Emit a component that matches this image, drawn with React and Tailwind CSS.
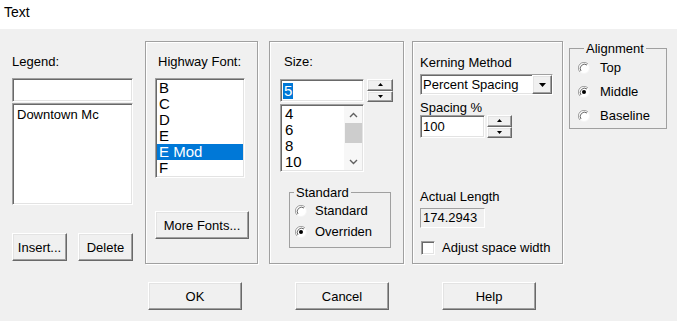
import React from "react";

// classic win32 bevels
const raised =
  "bg-[#f0f0f0] border border-t-white border-l-white border-r-[#696969] border-b-[#696969] shadow-[inset_-1px_-1px_0_#a0a0a0,inset_1px_1px_0_#e3e3e3]";
const sunken =
  "bg-white border border-t-[#a0a0a0] border-l-[#a0a0a0] border-r-white border-b-white shadow-[inset_1px_1px_0_#696969,inset_-1px_-1px_0_#e3e3e3]";
const panel =
  "border border-[#a0a0a0] shadow-[inset_1px_1px_0_white,1px_1px_0_white]";

const Tri = ({ up }) => (
  <svg width="5" height="3" viewBox="0 0 5 3">
    <path d={up ? "M2.5 0 L5 3 L0 3 Z" : "M0 0 L5 0 L2.5 3 Z"} fill="#000" />
  </svg>
);

const Spinner = ({ w }) => (
  <div className={`flex flex-col h-full ${w}`}>
    <div className={`${raised} flex-1 flex items-center justify-center`}>
      <Tri up />
    </div>
    <div className={`${raised} flex-1 flex items-center justify-center`}>
      <Tri />
    </div>
  </div>
);

const Radio = ({ checked }) => (
  <svg width="12" height="12" viewBox="0 0 12 12" className="shrink-0">
    <circle cx="6" cy="6" r="5.5" fill="#fff" stroke="#f4f4f4" />
    <path d="M10 2 A5.6 5.6 0 0 0 2 10" fill="none" stroke="#a0a0a0" />
    <path d="M9 3 A4.3 4.3 0 0 0 3 9" fill="none" stroke="#696969" />
    {checked && <circle cx="6" cy="6" r="2" fill="#000" />}
  </svg>
);

const Btn = ({ w, children }) => (
  <button className={`${raised} ${w} h-[28px] text-[13px] leading-none text-black`}>
    {children}
  </button>
);

const Chevron = ({ up }) => (
  <svg width="9" height="6" viewBox="0 0 9 6">
    <path
      d={up ? "M1 5 L4.5 1.5 L8 5" : "M1 1 L4.5 4.5 L8 1"}
      fill="none"
      stroke="#606060"
      strokeWidth="1.4"
    />
  </svg>
);

// group box: caption sits on the top border
const GroupBox = ({ title, className, boxH, legendMl, children }) => (
  <div className={`flex flex-col ${className}`}>
    <div className={`mt-[7px] border border-[#a0a0a0] flex flex-col ${boxH}`}>
      <span className={`-mt-[8px] ${legendMl} self-start bg-[#f0f0f0] px-[2px] leading-[15px]`}>
        {title}
      </span>
      {children}
    </div>
  </div>
);

export default function App() {
  const fonts = ["B", "C", "D", "E", "E Mod", "F"];
  const sizes = ["4", "6", "8", "10"];

  return (
    <div className="w-[677px] h-[321px] bg-[#f0f0f0] font-['Liberation_Sans',Arial,sans-serif] text-[13px] text-black overflow-hidden">
      {/* title bar */}
      <div className="h-[29px] bg-white pl-[4px] pt-[4px] text-[14px] leading-[17px]">
        Text
      </div>

      <div className="flex items-start pt-[12px]">
        {/* Legend column */}
        <div className="ml-[12px] w-[121px] shrink-0 flex flex-col">
          <div className="mt-[13px] leading-[15px]">Legend:</div>
          <div className={`${sunken} mt-[9px] h-[24px]`} />
          <div className={`${sunken} mt-[1px] h-[102px] pl-[4px] pt-[3px] leading-[15px]`}>
            Downtown Mc
          </div>
          <div className="flex mt-[28px] gap-[11px]">
            <Btn w="w-[55px]">Insert...</Btn>
            <Btn w="w-[55px]">Delete</Btn>
          </div>
        </div>

        {/* Highway font */}
        <div className={`${panel} ml-[12px] w-[113px] h-[223px] shrink-0 flex flex-col pl-[9px]`}>
          <div className="mt-[12px] pl-[3px] leading-[15px]">Highway Font:</div>
          <div className={`${sunken} mt-[9px] w-[90px] h-[100px] pt-[1px] px-[1px] text-[15px] leading-[16px]`}>
            {fonts.map((f) => (
              <div
                key={f}
                className={`h-[16px] pl-[2px] ${f === "E Mod" ? "bg-[#0078d7] text-white" : ""}`}
              >
                {f}
              </div>
            ))}
          </div>
          <div className="mt-[33px]">
            <Btn w="w-[94px]">More Fonts...</Btn>
          </div>
        </div>

        {/* Size */}
        <div className={`${panel} ml-[11px] w-[135px] h-[223px] shrink-0 flex flex-col pl-[10px]`}>
          <div className="mt-[12px] pl-[4px] leading-[15px]">Size:</div>
          <div className="flex mt-[10px] h-[23px]">
            <div className={`${sunken} w-[84px] pl-[2px] flex items-center`}>
              <span className="bg-[#0078d7] text-white text-[15px] leading-[16px] px-[1px]">5</span>
            </div>
            <div className="ml-[3px] h-full">
              <Spinner w="w-[26px]" />
            </div>
          </div>
          <div className={`${sunken} mt-[2px] w-[84px] h-[68px] flex`}>
            <div className="flex-1 pl-[4px] pt-[1px] text-[15px] leading-[16px]">
              {sizes.map((s) => (
                <div key={s} className="h-[16px]">
                  {s}
                </div>
              ))}
            </div>
            <div className="w-[18px] flex flex-col items-center bg-[#f7f7f7] my-[1px] mr-[1px]">
              <div className="h-[17px] flex items-center justify-center">
                <Chevron up />
              </div>
              <div className="w-[17px] h-[20px] bg-[#cdcdcd]" />
              <div className="flex-1" />
              <div className="h-[17px] flex items-center justify-center">
                <Chevron />
              </div>
            </div>
          </div>
          <GroupBox
            title="Standard"
            className="mt-[13px] ml-[9px] w-[102px]"
            boxH="h-[56px]"
            legendMl="ml-[4px]"
          >
            <div className="h-[21px] flex items-center gap-[8px] pl-[5px]">
              <Radio />
              <span>Standard</span>
            </div>
            <div className="h-[22px] flex items-center gap-[8px] pl-[5px]">
              <Radio checked />
              <span>Overriden</span>
            </div>
          </GroupBox>
        </div>

        {/* Kerning */}
        <div className={`${panel} ml-[8px] w-[151px] h-[223px] shrink-0 flex flex-col pl-[7px]`}>
          <div className="mt-[13px] leading-[15px]">Kerning Method</div>
          <div className={`${sunken} mt-[4px] w-[133px] h-[21px] flex`}>
            <div className="flex-1 pl-[2px] leading-[19px]">Percent Spacing</div>
            <div className={`${raised} w-[20px] flex items-center justify-center`}>
              <svg width="7" height="4" viewBox="0 0 7 4">
                <path d="M0 0 L7 0 L3.5 4 Z" fill="#000" />
              </svg>
            </div>
          </div>
          <div className="mt-[5px] leading-[15px]">Spacing %</div>
          <div className="flex h-[23px]">
            <div className={`${sunken} w-[65px] pl-[2px] leading-[21px]`}>100</div>
            <div className="ml-[2px] h-full">
              <Spinner w="w-[25px]" />
            </div>
          </div>
          <div className="mt-[51px] leading-[15px]">Actual Length</div>
          <div className="mt-[4px] w-[65px] h-[20px] border border-t-[#a0a0a0] border-l-[#a0a0a0] border-r-white border-b-white pl-[2px] leading-[18px]">
            174.2943
          </div>
          <div className="mt-[10px] flex items-center">
            <div className={`${sunken} ml-[1px] w-[14px] h-[14px]`} />
            <span className="ml-[7px]">Adjust space width</span>
          </div>
        </div>

        {/* Alignment */}
        <GroupBox
          title="Alignment"
          className="ml-[6px] w-[98px] shrink-0"
          boxH="h-[81px]"
          legendMl="ml-[14px]"
        >
          {[
            ["Top", false],
            ["Middle", true],
            ["Baseline", false],
          ].map(([t, c]) => (
            <div key={t} className="h-[24px] flex items-center gap-[10px] pl-[8px]">
              <Radio checked={c} />
              <span>{t}</span>
            </div>
          ))}
        </GroupBox>
      </div>

      {/* bottom buttons */}
      <div className="flex ml-[148px] mt-[18px] gap-[53px]">
        <Btn w="w-[94px]">OK</Btn>
        <Btn w="w-[94px]">Cancel</Btn>
        <Btn w="w-[94px]">Help</Btn>
      </div>
    </div>
  );
}
